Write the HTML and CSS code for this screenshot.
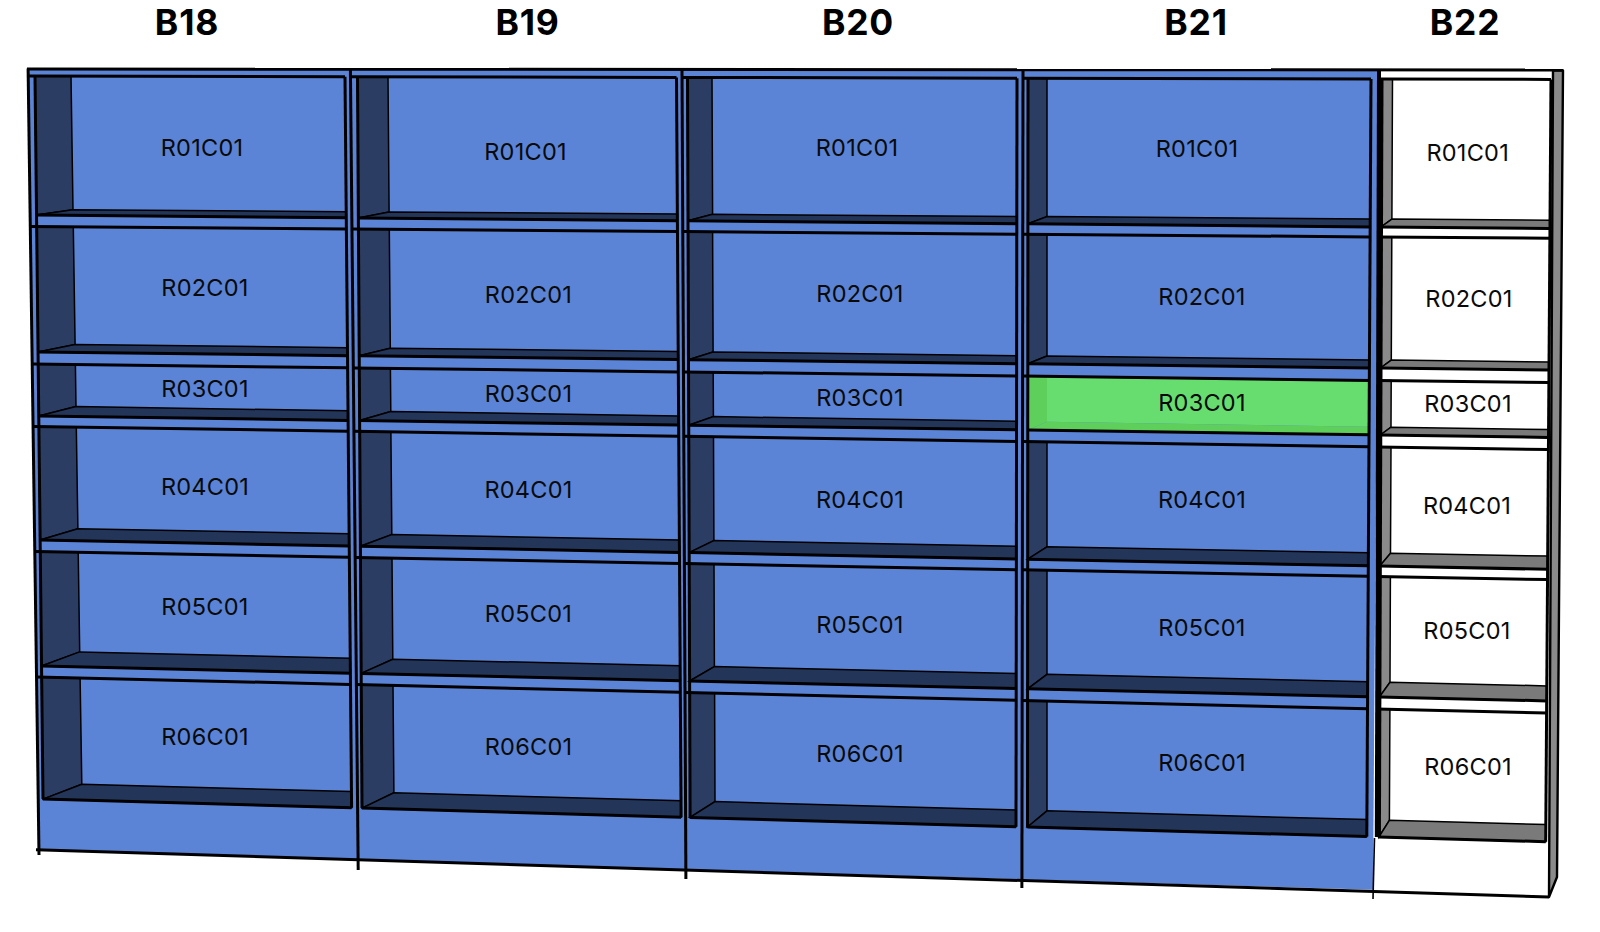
FILE: index.html
```html
<!DOCTYPE html>
<html lang="en">
<head>
<meta charset="utf-8">
<title>Bays</title>
<link rel="stylesheet" href="styles.css">
</head>
<body>
<svg class="rack" id="rack" width="1600" height="932" viewBox="0 0 1600 932" xmlns="http://www.w3.org/2000/svg">
  <g id="shapes"></g>
  <g class="heads">
    <text x="187" y="22.5">B18</text>
    <text x="527.5" y="22.5">B19</text>
    <text x="858" y="22.5">B20</text>
    <text x="1196" y="22.5">B21</text>
    <text x="1465" y="22.5">B22</text>
  </g>
  <g class="labels">
    <text x="202" y="147">R01C01</text>
    <text x="205" y="287">R02C01</text>
    <text x="205" y="388">R03C01</text>
    <text x="205" y="486">R04C01</text>
    <text x="205" y="606.5">R05C01</text>
    <text x="205" y="736">R06C01</text>

    <text x="525.5" y="151">R01C01</text>
    <text x="528.5" y="294">R02C01</text>
    <text x="528.5" y="393">R03C01</text>
    <text x="528.5" y="489">R04C01</text>
    <text x="528.5" y="613">R05C01</text>
    <text x="528.5" y="746">R06C01</text>

    <text x="857" y="147">R01C01</text>
    <text x="860" y="293">R02C01</text>
    <text x="860" y="397">R03C01</text>
    <text x="860" y="499">R04C01</text>
    <text x="860" y="624.5">R05C01</text>
    <text x="860" y="753">R06C01</text>

    <text x="1197" y="148">R01C01</text>
    <text x="1202" y="296">R02C01</text>
    <text x="1202" y="402">R03C01</text>
    <text x="1202" y="499">R04C01</text>
    <text x="1202" y="627.5">R05C01</text>
    <text x="1202" y="762">R06C01</text>

    <text x="1467.7" y="152">R01C01</text>
    <text x="1469" y="298">R02C01</text>
    <text x="1468" y="403.5">R03C01</text>
    <text x="1467" y="505">R04C01</text>
    <text x="1467" y="630.5">R05C01</text>
    <text x="1468" y="766">R06C01</text>
  </g>
</svg>
<script src="shelves.js"></script>
</body>
</html>
```

FILE: styles.css
```css
html, body {
  margin: 0;
  padding: 0;
  background: #ffffff;
}

.rack {
  display: block;
}

.heads text {
  font-family: Inter, "Liberation Sans", sans-serif;
  font-weight: 700;
  font-size: 35.5px;
  letter-spacing: 0.8px;
  fill: #000000;
  text-anchor: middle;
  dominant-baseline: central;
}

.labels text {
  font-family: Inter, "Liberation Sans", sans-serif;
  font-weight: 400;
  font-size: 23.5px;
  letter-spacing: 0.25px;
  fill: #0a0a0a;
  text-anchor: middle;
  dominant-baseline: central;
}

.body-blue { fill: #5b84d6; }
.body-white { fill: #ffffff; }
.back-blue { fill: #5b84d6; }
.back-white { fill: #ffffff; }
.back-green { fill: #67dd70; }

.side-blue { fill: #2b3d63; stroke: #000000; stroke-width: 1.5; }
.floor-blue { fill: #24355a; stroke: #000000; stroke-width: 1.5; }
.side-white { fill: #8a8a8a; stroke: #000000; stroke-width: 1.5; }
.floor-white { fill: #7a7a7a; stroke: #000000; stroke-width: 1.5; }
.side-green, .floor-green { fill: #5ecf5a; }

.line { stroke: #000000; stroke-width: 3; fill: none; }
.line-thin { stroke: #000000; stroke-width: 1.6; fill: none; }
.line-heavy { stroke: #000000; stroke-width: 4; fill: none; }
.end-panel { fill: #8a8a8a; stroke: #000000; stroke-width: 2.4; stroke-linejoin: round; }
```

FILE: shelves.js
```js
// Shelf edges of a perspective drawing: each edge is a straight line across the
// whole rack, given by its y at x=40 and at x=1380.
var ROWS = [
  { top: [76, 79],       back: [209.5, 219], front: [215, 227] },
  { top: [226.5, 237],   back: [344, 360],   front: [352, 368] },
  { top: [364, 380.5],   back: [406, 427],   front: [416, 435] },
  { top: [426.5, 447],   back: [528, 553],   front: [540, 566] },
  { top: [551.5, 576.5], back: [651, 682],   front: [666, 697] },
  { top: [677, 709],     back: [783, 820],   front: [799, 837] }
];

// Upright edges of each bay: x at y=76 and at y=800.
var BAYS = [
  { tone: "blue",  outer: [28.2, 38.2],   inner: [35, 43],       back: [71, 82],       right: [345, 351.5], next: [350.5, 357.5] },
  { tone: "blue",  outer: [350.5, 357.5], inner: [357.5, 362],   back: [388, 394],     right: [676.5, 681], next: [682, 685.5] },
  { tone: "blue",  outer: [682, 685.5],   inner: [687.5, 690],   back: [712, 715],     right: [1017, 1016], next: [1023, 1022] },
  { tone: "blue",  outer: [1023, 1022],   inner: [1028, 1027.5], back: [1047, 1047],   right: [1371, 1367], next: [1379, 1376.2] },
  { tone: "white", outer: [1379, 1376.2], inner: [1381.5, 1379], back: [1392.5, 1389.5], right: [1551, 1546], next: [1553, 1550] }
];

var GREEN = { bay: 3, row: 2 };
var NS = "http://www.w3.org/2000/svg";
var root = document.getElementById("shapes");

function lineY(edge, x) {
  return edge[0] + (edge[1] - edge[0]) * (x - 40) / 1340;
}
function lineX(edge, y) {
  return edge[0] + (edge[1] - edge[0]) * (y - 76) / 724;
}
// Point where an upright meets a shelf edge.
function at(upright, shelf) {
  var x = lineX(upright, lineY(shelf, upright[0]));
  return [x, lineY(shelf, x)];
}
function add(tag, cls, attrs) {
  var el = document.createElementNS(NS, tag);
  el.setAttribute("class", cls);
  Object.keys(attrs).forEach(function (k) { el.setAttribute(k, attrs[k]); });
  root.appendChild(el);
}
function poly(cls, pts) {
  add("polygon", cls, { points: pts.map(function (p) { return p[0].toFixed(1) + "," + p[1].toFixed(1); }).join(" ") });
}
function seg(cls, a, b) {
  add("line", cls, { x1: a[0].toFixed(1), y1: a[1].toFixed(1), x2: b[0].toFixed(1), y2: b[1].toFixed(1) });
}

var TOP_LINE = [69, 70];
var BOTTOM_LINE = [850.2, 890];

BAYS.forEach(function (bay, b) {
  var last = b === BAYS.length - 1;
  var tl = [lineX(bay.outer, 69), lineY(TOP_LINE, bay.outer[0])];
  var tr = [lineX(bay.next, 70), lineY(TOP_LINE, bay.next[0])];
  var brX = last ? 1549 : (b === 3 ? 1373 : lineX(bay.next, 861));
  var blX = b === 4 ? 1373 : lineX(bay.outer, 855);
  var body = [tl, tr];
  if (b === 3) { body.push([1376, 837]); }
  body.push([brX, lineY(BOTTOM_LINE, brX)]);
  body.push([blX, lineY(BOTTOM_LINE, blX)]);
  poly("body-" + bay.tone, body);

  ROWS.forEach(function (row, r) {
    var green = b === GREEN.bay && r === GREEN.row;
    var tone = green ? "green" : bay.tone;
    var a = at(bay.inner, row.top);
    var c = at(bay.back, row.top);
    var d = at(bay.back, row.back);
    var e = at(bay.inner, row.front);
    var f = at(bay.right, row.top);
    var g = at(bay.right, row.back);
    var h = at(bay.right, row.front);
    poly("back-" + tone, [c, f, g, d]);
    poly("side-" + tone, [a, c, d, e]);
    poly("floor-" + tone, [d, g, h, e]);
    seg("line", at(bay.outer, row.top), f);
    seg("line", e, h);
  });

  var first = ROWS[0].top;
  var final = ROWS[ROWS.length - 1].front;
  seg(bay.tone === "white" ? "line-heavy" : "line", at(bay.inner, first), at(bay.inner, final));
  seg("line", at(bay.right, first), at(bay.right, final));
});

// Upright dividers, running past the bottom edge.
BAYS.slice(0, 4).forEach(function (bay, b) {
  var base = b === 0 ? 855 : 870 + (b - 1) * 9;
  seg("line", [lineX(bay.outer, 68), 68.5 + b * 0.3], [lineX(bay.outer, base), base]);
});
seg("line-thin", [1374.5, 838], [1373, 899]);
seg("line-heavy", [1379, 70], [1376.8, 837]);

// End panel of the last bay.
poly("end-panel", [[1553, 70.5], [1563, 70.5], [1557, 877], [1549, 897]]);

// Top and bottom edges of the whole rack.
seg("line", [27, 69], [1563, 70]);
seg("line", [36, 849.7], [1549, 897]);
```
